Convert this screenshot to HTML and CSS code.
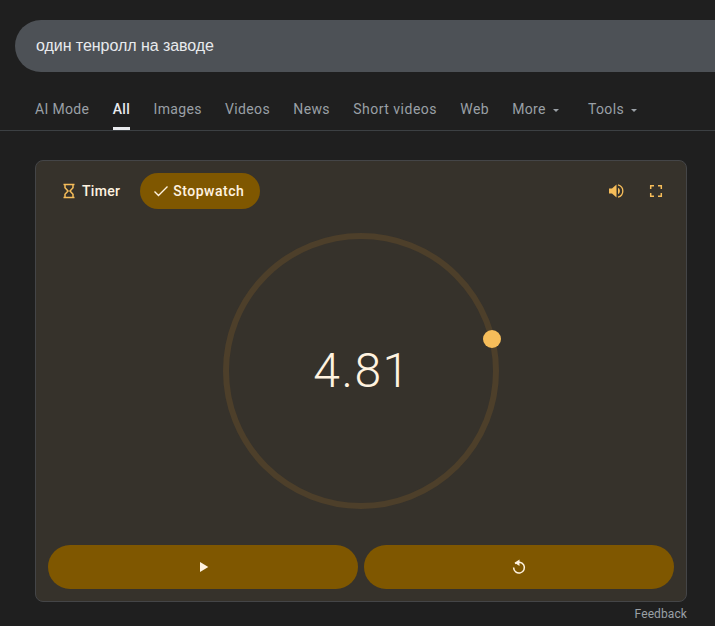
FILE: index.html
```html
<!DOCTYPE html>
<html lang="en">
<head>
    <meta charset="UTF-8">
    <title>один тенролл на заводе</title>
    <link rel="stylesheet" href="styles.css">
</head>
<body>
    <!-- Search bar -->
    <div class="search-bar">один тенролл на заводе</div>

    <!-- Tabs -->
    <div class="tabs">
        <a class="tab">AI Mode</a>
        <a class="tab active">All</a>
        <a class="tab">Images</a>
        <a class="tab">Videos</a>
        <a class="tab">News</a>
        <a class="tab tab-wide">Short videos</a>
        <a class="tab">Web</a>
        <a class="tab tab-menu">More <span class="caret"></span></a>
        <a class="tab tab-menu tools">Tools <span class="caret"></span></a>
    </div>

    <!-- Stopwatch card -->
    <div class="card">
        <div class="card-head">
            <div class="mode mode-timer">
                <svg class="icon" viewBox="0 0 18 18" width="18" height="18">
                    <path d="M3.500 2.500h11M3.500 15.500h11M5 2.500v3.200L8 9l-3 3.300v3.200M13 2.500v3.200L10 9l3 3.300v3.200" fill="none" stroke="#f6bd5a" stroke-width="1.500"/>
                </svg>
                Timer
            </div>
            <div class="mode mode-stopwatch">
                <svg class="icon" viewBox="0 0 18 18" width="18" height="18">
                    <path d="M2.500 9.500l4 4 9-9" fill="none" stroke="#fff3e0" stroke-width="1.400"/>
                </svg>
                Stopwatch
            </div>
            <div class="head-icons">
                <svg viewBox="0 0 18 18" width="18" height="18">
                    <path d="M2 6.500v5h3l4.500 4v-13L5 6.500z" fill="#f6bd5a"/>
                    <path d="M11 5.800a3.600 3.600 0 0 1 0 6.400z" fill="#f6bd5a"/>
                    <path d="M11 2.800a6.400 6.400 0 0 1 0 12.400" fill="none" stroke="#f6bd5a" stroke-width="1.300"/>
                </svg>
                <svg viewBox="0 0 18 18" width="18" height="18">
                    <path d="M3.700 7V3.700H7M11 3.700h3.300V7M14.300 11v3.300H11M7 14.300H3.700V11" fill="none" stroke="#f6bd5a" stroke-width="1.500"/>
                </svg>
            </div>
        </div>

        <div class="dial">
            <div class="ring">
                <svg viewBox="0 0 290 290" width="290" height="290">
                    <circle cx="145" cy="145" r="135" fill="none" stroke="#4d3f2a" stroke-width="6"/>
                    <circle cx="276" cy="113" r="9" fill="#f6bd5a"/>
                </svg>
                <div class="time">4.81</div>
            </div>
        </div>

        <div class="controls">
            <button class="ctrl">
                <svg class="play" viewBox="0 0 18 18" width="18" height="18"><path d="M5 4v10l8.300-5z" fill="#fff3e0"/></svg>
            </button>
            <button class="ctrl">
                <svg viewBox="0 0 18 18" width="18" height="18">
                    <path d="M5.200 5.800A5.400 5.400 0 1 1 3.600 9.600" fill="none" stroke="#fff3e0" stroke-width="1.500"/>
                    <path d="M9.500 1.500v6.500L4.500 4.700z" fill="#fff3e0"/>
                </svg>
            </button>
        </div>
    </div>

    <div class="feedback">Feedback</div>
</body>
</html>
```

FILE: styles.css
```css
/* Global Styles */
body {
    margin: 0;
    height: 626px;
    overflow: hidden;
    background-color: #1f1f1f;
    font-family: Roboto, Arial, sans-serif;
}

/* Search bar */
.search-bar {
    box-sizing: border-box;
    height: 52px;
    margin: 20px 0 0 15px;
    padding-left: 21px;
    border-radius: 26px 0 0 26px;
    background-color: #4d5156;
    color: #e8eaed;
    font-family: "Liberation Sans", Arial, sans-serif;
    font-size: 16px;
    line-height: 52px;
    letter-spacing: -0.05px;
}

/* Tabs */
.tabs {
    display: flex;
    box-sizing: border-box;
    height: 59px;
    padding-left: 35px;
    gap: 23.300px;
    border-bottom: 1px solid #3c4043;
}

.tab {
    box-sizing: border-box;
    height: 58px;
    padding-top: 29px;
    color: #9aa0a6;
    font-size: 14px;
    line-height: 16px;
    letter-spacing: 0.35px;
    white-space: nowrap;
}

.tab-wide {
    letter-spacing: 0.5px;
}

.tab.active {
    color: #e8eaed;
    font-weight: 500;
    border-bottom: 3px solid #e8eaed;
}

.tools {
    margin-left: 6px;
}

.caret {
    display: inline-block;
    width: 0;
    height: 0;
    margin: 0 0 2px 3px;
    border-left: 3.500px solid transparent;
    border-right: 3.500px solid transparent;
    border-top: 3.500px solid #9aa0a6;
}

/* Card */
.card {
    box-sizing: border-box;
    width: 652px;
    height: 442px;
    margin: 29px 0 0 35px;
    padding: 12px;
    display: flex;
    flex-direction: column;
    background-color: #36322b;
    border: 1px solid #444547;
    border-radius: 8px;
}

.card-head {
    display: flex;
    align-items: center;
    height: 36px;
    gap: 8px;
}

.mode {
    display: flex;
    align-items: center;
    gap: 4px;
    height: 36px;
    color: #fff3e0;
    font-size: 14px;
    font-weight: 500;
    letter-spacing: 0.3px;
    border-radius: 18px;
}

.mode-timer {
    padding: 0 12px;
}

.mode-stopwatch {
    gap: 3px;
    padding: 0 16px 0 12px;
    width: 120px;
    box-sizing: border-box;
    letter-spacing: 0.5px;
    background-color: #7f5700;
}

.head-icons {
    display: flex;
    gap: 22px;
    margin-left: auto;
    padding-right: 9px;
}

/* Dial */
.dial {
    flex: 1;
    display: flex;
    align-items: center;
    justify-content: center;
    padding-bottom: 12px;
}

.ring {
    position: relative;
    width: 290px;
    height: 290px;
}

.time {
    position: absolute;
    left: 2px;
    right: 0;
    top: 117px;
    text-align: center;
    color: #fff3e0;
    font-size: 48px;
    font-weight: 300;
    line-height: 56px;
    letter-spacing: 1.500px;
}

/* Controls */
.controls {
    display: flex;
    gap: 6px;
}

.ctrl {
    flex: 1;
    height: 44px;
    padding: 0;
    display: flex;
    align-items: center;
    justify-content: center;
    border: 0;
    border-radius: 22px;
    background-color: #7f5700;
}

.play {
    margin-left: 2px;
}

.feedback {
    margin: 5px 28px 0 0;
    text-align: right;
    color: #9aa0a6;
    font-size: 12px;
    line-height: 14px;
    letter-spacing: 0.1px;
}
```
